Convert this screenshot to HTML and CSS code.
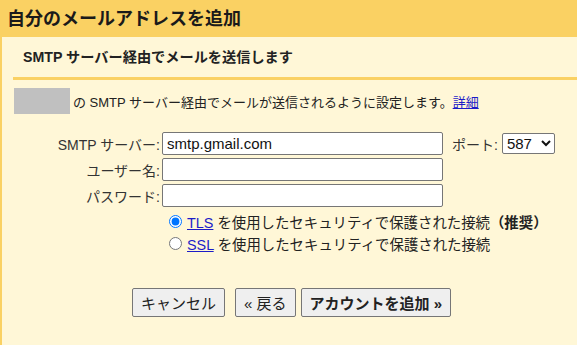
FILE: index.html
```html
<html>
<head>
  <title>自分のメールアドレスを追加</title>
  <link rel="stylesheet" href="styles.css">
</head>
<body>
  <div class="dialog">
    <div class="title">自分のメールアドレスを追加</div>
    <div class="content">
      <div class="subhead">SMTP サーバー経由でメールを送信します</div>
      <div class="note">
        <span class="mask"></span>
        <span>の SMTP サーバー経由でメールが送信されるように設定します。<a href="#!">詳細</a></span>
      </div>
      <div class="form">
        <div class="row">
          <label class="label">SMTP サーバー:</label>
          <input class="field" type="text" value="smtp.gmail.com">
          <label class="port-label">ポート:</label>
          <select class="port">
            <option>587</option>
            <option>465</option>
          </select>
        </div>
        <div class="row">
          <label class="label">ユーザー名:</label>
          <input class="field" type="text">
        </div>
        <div class="row">
          <label class="label">パスワード:</label>
          <input class="field" type="password">
        </div>
      </div>
      <div class="options">
        <label class="option"><input type="radio" name="sec" checked><span><a href="#!">TLS</a> を使用したセキュリティで保護された接続<strong>（推奨）</strong></span></label>
        <label class="option"><input type="radio" name="sec"><span><a href="#!">SSL</a> を使用したセキュリティで保護された接続</span></label>
      </div>
      <div class="buttons">
        <button class="btn">キャンセル</button>
        <button class="btn back">« 戻る</button>
        <button class="btn primary">アカウントを追加 »</button>
      </div>
    </div>
  </div>
</body>
</html>
```

FILE: styles.css
```css
* {
  font-family: "Liberation Sans", "Noto Sans CJK JP", sans-serif;
}
body {
  margin: 0;
  color: #222;
}
.dialog {
  height: 345px;
  overflow: hidden;
}
.title {
  background: #fad163;
  height: 37px;
  line-height: 38px;
  padding-left: 7px;
  font-size: 18px;
  font-weight: bold;
  color: #1a1a1a;
}
.content {
  background: #fff7d7;
  border-left: 2px solid #fad163;
  height: 308px;
}
.subhead {
  margin-left: 11px;
  padding-left: 10px;
  height: 40px;
  line-height: 40px;
  font-size: 14.2px;
  font-weight: bold;
  border-bottom: 3px solid #fad163;
}
.note {
  display: flex;
  align-items: center;
  margin: 8px 0 0 12px;
  font-size: 13px;
}
.mask {
  width: 56px;
  height: 26px;
  background: #c0c0c0;
  margin-right: 3px;
}
a {
  color: #1c1cc8;
}
.form {
  margin-top: 18px;
}
.row {
  display: flex;
  align-items: center;
  height: 23px;
  margin-bottom: 3px;
  font-size: 14px;
}
.label {
  width: 158px;
  text-align: right;
  color: #333;
}
.field {
  margin-left: 2px;
  width: 281px;
  height: 23px;
  box-sizing: border-box;
  border: 1px solid #767676;
  border-radius: 2px;
  padding: 0 4px;
  font-size: 15px;
  background: #fff;
  color: #111;
}
.port-label {
  margin-left: 9px;
  color: #333;
}
.port {
  margin-left: 4px;
  width: 53px;
  height: 21px;
  font-size: 15px;
  border: 1px solid #767676;
  border-radius: 2px;
  background: #fff;
  color: #111;
}
.option {
  display: flex;
  align-items: center;
  height: 22px;
  font-size: 14.4px;
  padding-left: 167px;
}
.option input {
  margin: 0 5px 0 0;
  width: 13px;
  height: 13px;
}
.buttons {
  display: flex;
  margin: 34px 0 0 130px;
}
.btn {
  height: 29px;
  padding: 0 8px;
  font-size: 15px;
  background: #efefef;
  border: 1px solid #767676;
  border-radius: 2px;
  color: #222;
}
.back {
  margin-left: 10px;
}
.primary {
  margin-left: 5px;
  font-weight: bold;
}
```
